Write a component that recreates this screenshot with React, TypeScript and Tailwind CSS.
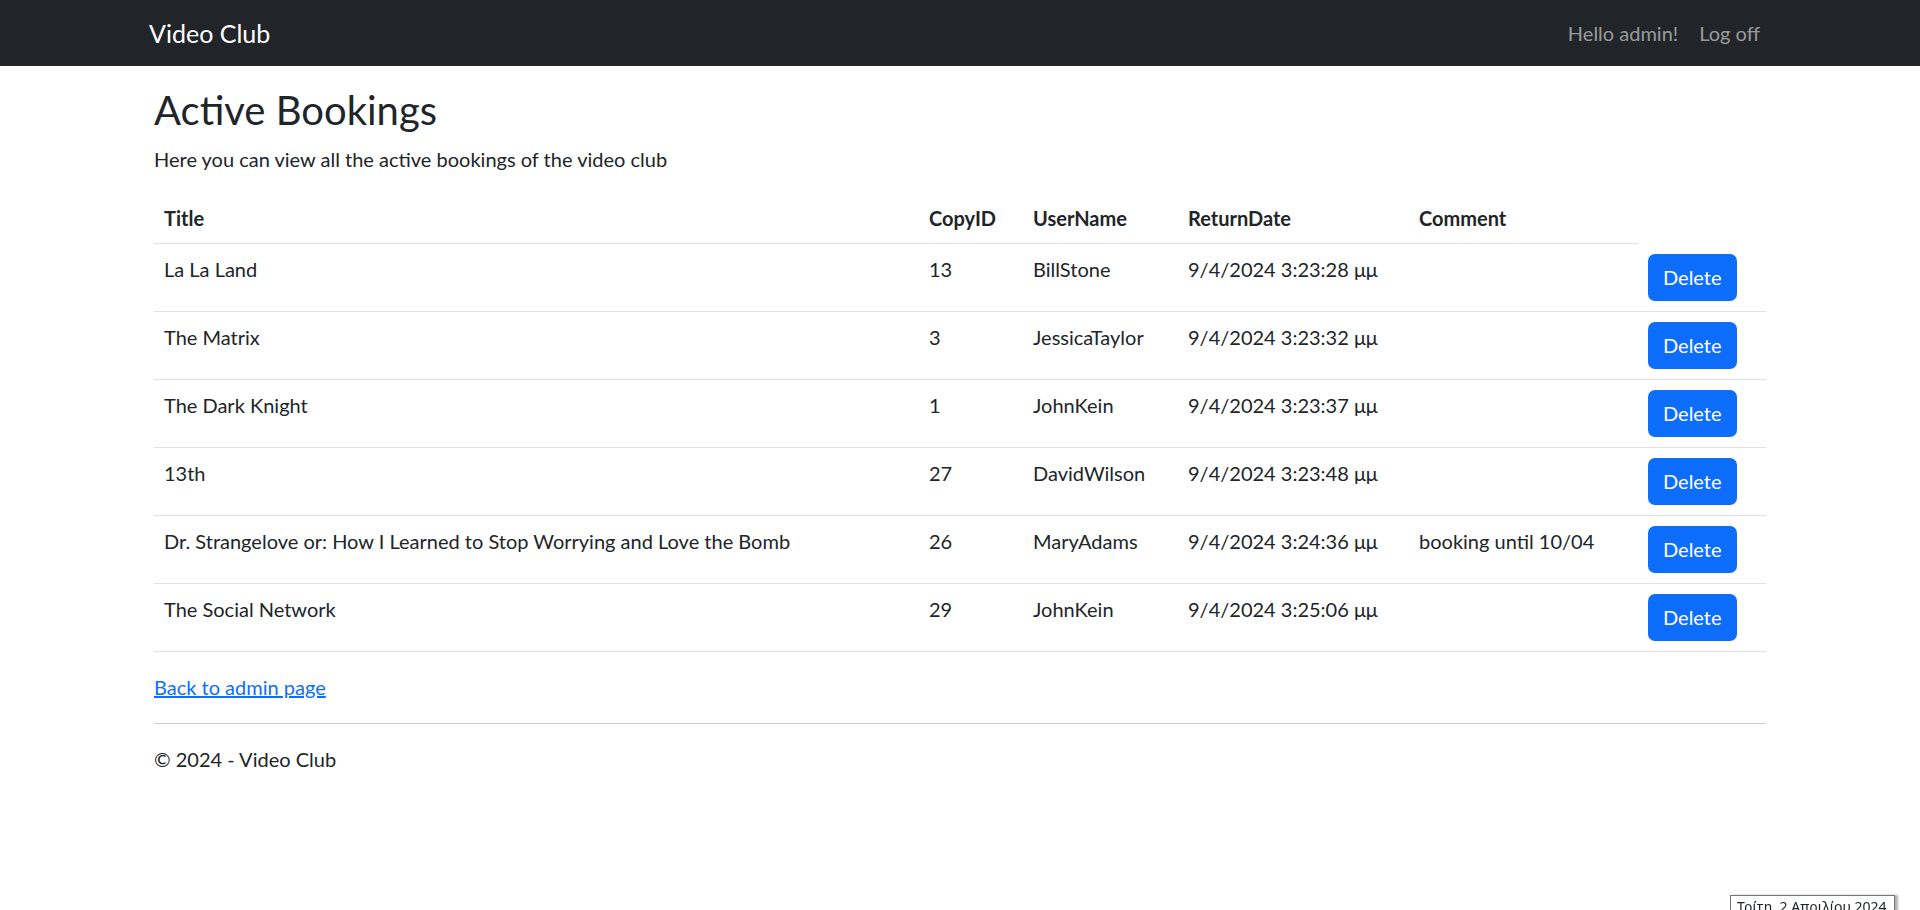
type Booking = {
  title: string;
  copyId: number;
  userName: string;
  returnDate: string;
  comment: string;
};

const bookings: Booking[] = [
  { title: "La La Land", copyId: 13, userName: "BillStone", returnDate: "9/4/2024 3:23:28 μμ", comment: "" },
  { title: "The Matrix", copyId: 3, userName: "JessicaTaylor", returnDate: "9/4/2024 3:23:32 μμ", comment: "" },
  { title: "The Dark Knight", copyId: 1, userName: "JohnKein", returnDate: "9/4/2024 3:23:37 μμ", comment: "" },
  { title: "13th", copyId: 27, userName: "DavidWilson", returnDate: "9/4/2024 3:23:48 μμ", comment: "" },
  {
    title: "Dr. Strangelove or: How I Learned to Stop Worrying and Love the Bomb",
    copyId: 26,
    userName: "MaryAdams",
    returnDate: "9/4/2024 3:24:36 μμ",
    comment: "booking until 10/04",
  },
  { title: "The Social Network", copyId: 29, userName: "JohnKein", returnDate: "9/4/2024 3:25:06 μμ", comment: "" },
];

export default function App() {
  return (
    <div className="min-h-[910px] bg-white font-[Lato,'Noto_Sans',sans-serif] text-[20px] leading-[30px] text-[#212529]">
      <nav className="mb-[20px] flex h-[66px] items-center justify-between bg-[#212529] pl-[149px] pr-[150px]">
        <a href="#" className="text-[25px] leading-[37px] text-white">
          Video Club
        </a>
        <ul className="flex">
          <li>
            <a href="#" className="pl-[10px] pr-[11px] text-[rgba(255,255,255,0.55)]">
              Hello admin!
            </a>
          </li>
          <li>
            <a href="#" className="px-[10px] text-[rgba(255,255,255,0.55)]">
              Log off
            </a>
          </li>
        </ul>
      </nav>

      <div className="ml-[154px] w-[1612px]">
        <h2 className="mb-[10px] text-[40px] leading-[48px]">Active Bookings</h2>
        <p className="mb-[19px]">Here you can view all the active bookings of the video club</p>

        <table className="mb-[20px] w-[1612px] table-fixed border-collapse text-left align-top">
          <colgroup>
            <col className="w-[765px]" />
            <col className="w-[104px]" />
            <col className="w-[155px]" />
            <col className="w-[231px]" />
            <col className="w-[229px]" />
            <col className="w-[128px]" />
          </colgroup>
          <thead>
            <tr>
              <th className="border-b border-[#dee2e6] p-[10px] font-bold">Title</th>
              <th className="border-b border-[#dee2e6] p-[10px] font-bold">CopyID</th>
              <th className="border-b border-[#dee2e6] p-[10px] font-bold">UserName</th>
              <th className="border-b border-[#dee2e6] p-[10px] font-bold">ReturnDate</th>
              <th className="border-b border-[#dee2e6] p-[10px] font-bold">Comment</th>
            </tr>
          </thead>
          <tbody>
            {bookings.map((b, idx) => (
              <tr key={idx} className="align-top">
                <td className="border-b border-[#dee2e6] p-[10px] whitespace-nowrap">{b.title}</td>
                <td className="border-b border-[#dee2e6] p-[10px]">{b.copyId}</td>
                <td className="border-b border-[#dee2e6] p-[10px]">{b.userName}</td>
                <td className="border-b border-[#dee2e6] p-[10px]">{b.returnDate}</td>
                <td className="border-b border-[#dee2e6] p-[10px]">{b.comment}</td>
                <td className="border-b border-[#dee2e6] p-[10px]">
                  <button className="h-[47px] rounded-[7px] bg-[#0d6efd] px-[15px] text-white">
                    Delete
                  </button>
                </td>
              </tr>
            ))}
          </tbody>
        </table>

        <div>
          <a href="#" className="text-[#0d6efd] underline">
            Back to admin page
          </a>
        </div>

        <hr className="mt-[21px] mb-[20px] border-t border-[#c8c9ca]" />
        <footer>
          <p>© 2024 - Video Club</p>
        </footer>
      </div>

      <div className="fixed left-[1730px] top-[895px] w-[165px] border border-[#767676] bg-white px-[6px] font-['Noto_Sans',sans-serif] text-[14px] leading-[22px] whitespace-nowrap shadow-[3px_0_2px_rgba(0,0,0,0.3)]">
        Τρίτη, 2 Απριλίου 2024
      </div>
    </div>
  );
}
